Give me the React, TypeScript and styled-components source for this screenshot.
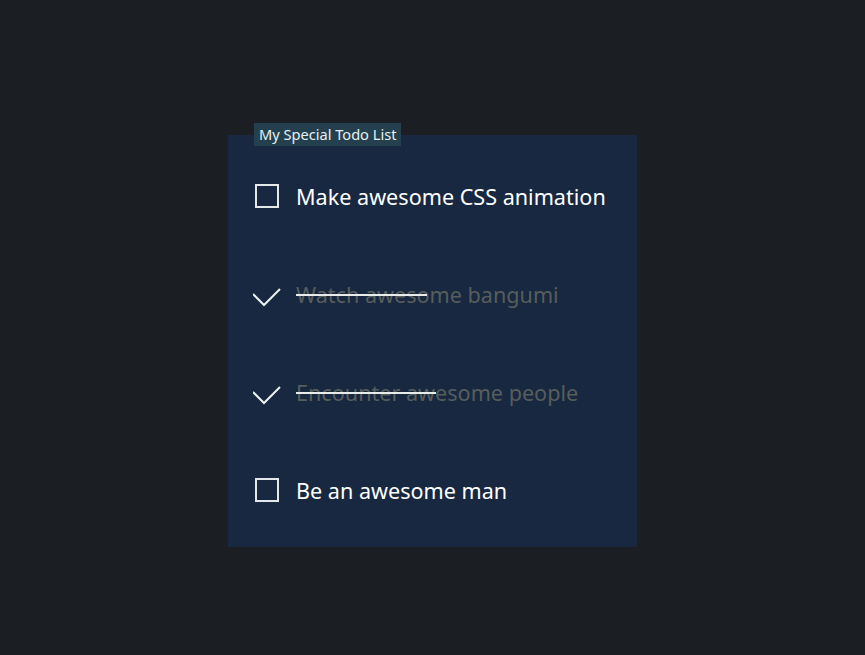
import React from "react";
import styled, { createGlobalStyle } from "styled-components";

const GlobalStyle = createGlobalStyle`
  html, body {
    margin: 0;
    padding: 0;
    background: #1b1e22;
    font-family: "Noto Sans", "Open Sans", sans-serif;
  }
`;

const Page = styled.div`
  min-height: 655px;
  display: flex;
  justify-content: center;
  align-items: flex-start;
  padding-top: 123px;
  box-sizing: border-box;
`;

const Panel = styled.fieldset`
  width: 409px;
  box-sizing: border-box;
  margin: 0;
  border: none;
  padding: 1px 25px 8px;
  background: #172840;
`;

const Title = styled.legend`
  margin-left: 1px;
  padding: 0 5px;
  height: 23px;
  line-height: 23px;
  font-size: 14.6px;
  color: #e6f0f2;
  background: #24404f;
`;

const Row = styled.label`
  height: 98px;
  display: flex;
  align-items: center;
  gap: 15px;
  cursor: pointer;
`;

const IconSlot = styled.span`
  width: 28px;
  height: 26px;
  display: flex;
  align-items: center;
  justify-content: center;
`;

const Box = styled.span`
  width: 24px;
  height: 24px;
  box-sizing: border-box;
  border: 2px solid #e4e8ea;
`;

const Label = styled.span<{ $done: boolean }>`
  position: relative;
  font-size: 21.6px;
  color: ${(p) => (p.$done ? "#575d5c" : "#ffffff")};
  white-space: nowrap;
`;

const Strike = styled.span<{ $w: number }>`
  position: absolute;
  left: 0;
  top: 50%;
  width: ${(p) => p.$w}px;
  height: 2px;
  background: #e8ecea;
`;

const CheckMark = styled.svg`
  flex: none;
  margin-top: 8px;
`;

const todos = [
  { text: "Make awesome CSS animation", done: false, strike: 0 },
  { text: "Watch awesome bangumi", done: true, strike: 131 },
  { text: "Encounter awesome people", done: true, strike: 140 },
  { text: "Be an awesome man", done: false, strike: 0 },
];

const Check = () => (
  <CheckMark width="28" height="20" viewBox="0 0 28 20">
    <path d="M0 6 L11 17 L27 1" fill="none" stroke="#eef2f0" strokeWidth="2" />
  </CheckMark>
);

export default function App() {
  return (
    <Page>
      <GlobalStyle />
      <Panel>
        <Title>My Special Todo List</Title>
        {todos.map((t) => (
          <Row key={t.text}>
            <IconSlot>{t.done ? <Check /> : <Box />}</IconSlot>
            <Label $done={t.done}>
              {t.text}
              {t.done && <Strike $w={t.strike} />}
            </Label>
          </Row>
        ))}
      </Panel>
    </Page>
  );
}
